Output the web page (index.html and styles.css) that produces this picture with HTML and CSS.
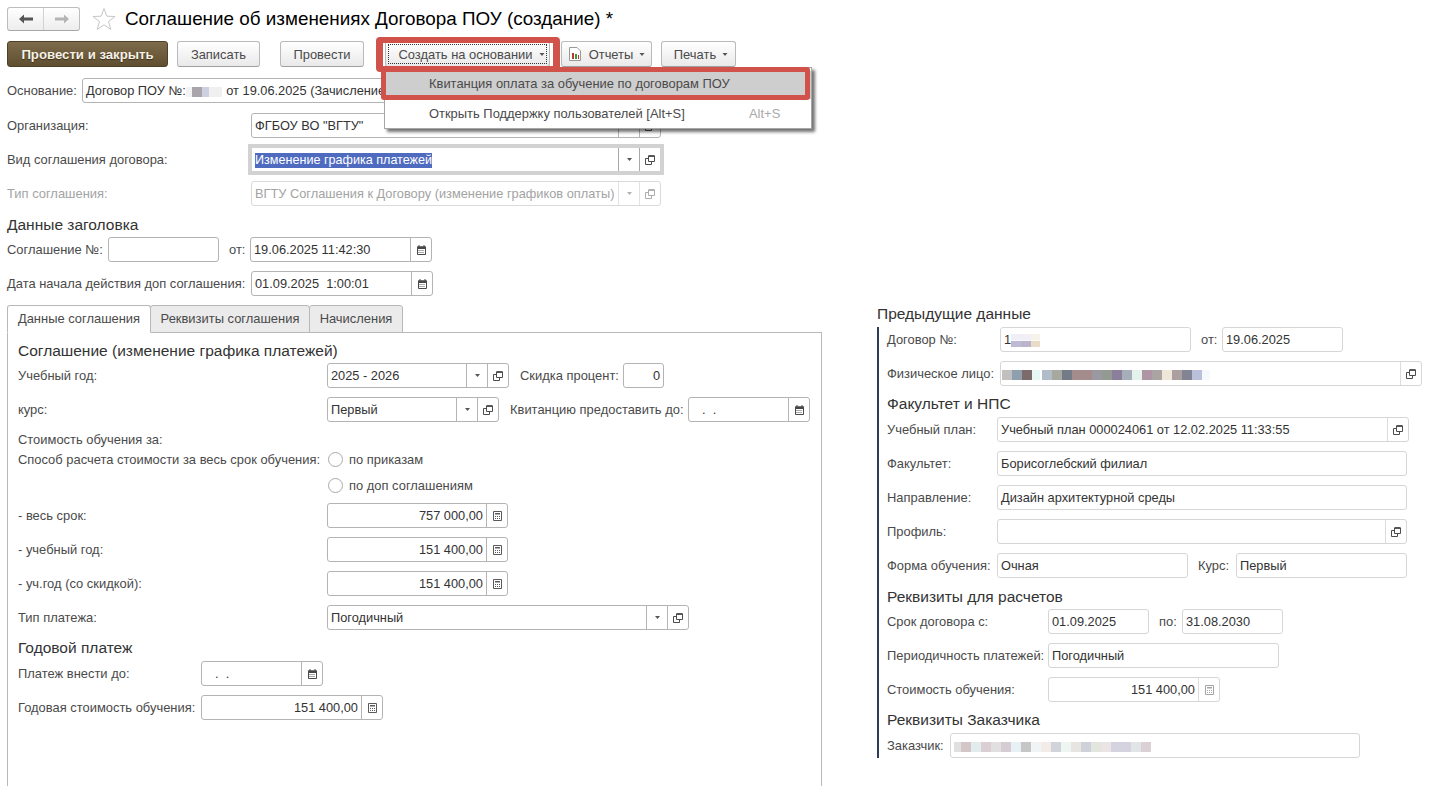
FILE: index.html
```html
<!DOCTYPE html>
<html lang="ru">
<head>
<meta charset="utf-8">
<title>Соглашение</title>
<link rel="stylesheet" href="styles.css">
</head>
<body>
<svg class="defs" width="0" height="0" aria-hidden="true">
  <symbol id="i-copy" viewBox="0 0 10 10"><path d="M3.500 1h6v5.500h-6z" fill="none" stroke="#4c4c4c"/><path d="M3.500 1h6" stroke="#3c3c3c" stroke-width="1.500"/><path d="M3.500 3.500H.5v6h6v-3" fill="none" stroke="#4c4c4c"/></symbol>
  <symbol id="i-tri" viewBox="0 0 5 3"><path d="M0 0h5L2.500 3z" fill="#555"/></symbol>
  <symbol id="i-cal" viewBox="0 0 9 10"><path d="M.5 2h8v7.500h-8z" fill="#fff" stroke="#484848"/><path d="M0 1.500h9V4H0z" fill="#484848"/><path d="M2 0v2M7 0v2" stroke="#484848"/><path d="M1.500 5.500h6M1.500 7.500h6" stroke="#555" stroke-dasharray="1 1" fill="none"/></symbol>
  <symbol id="i-calc" viewBox="0 0 9 10"><path d="M.5.500h8v9h-8z" fill="#fff" stroke="#5a5a5a"/><path d="M2 2h5v1.500H2z" fill="#5a5a5a"/><path d="M2 5.500h5M2 7.500h5" stroke="#5a5a5a" stroke-dasharray="1 1" fill="none"/></symbol>
</svg>

<header class="head">
  <div class="nav">
    <span class="nav-btn"><svg width="14" height="10" viewBox="0 0 14 10"><path d="M0 5l5-4.500V3.500h9v3H5v3z" fill="#555"/></svg></span>
    <span class="nav-btn"><svg width="14" height="10" viewBox="0 0 14 10"><path d="M14 5L9 .5V3.500H0v3h9v3z" fill="#b4b4b4"/></svg></span>
  </div>
  <svg class="star" width="24" height="24" viewBox="0 0 24 24"><path d="M12 1.500l2.800 7.700 8.200.3-6.500 5 2.300 7.900L12 17.800l-6.800 4.600 2.300-7.900-6.500-5 8.200-.3z" fill="#fff" stroke="#c6c6c6"/></svg>
  <h1 class="title">Соглашение об изменениях Договора ПОУ (создание) *</h1>
</header>

<nav class="toolbar">
  <span class="tb tb-main">Провести и закрыть</span>
  <span class="tb tb-save">Записать</span>
  <span class="tb tb-post">Провести</span>
  <div class="anchor">
    <span class="tb tb-create"><span class="focus">Создать на основании<svg class="tri" width="6" height="3"><use href="#i-tri"/></svg></span></span>
    <span class="mark mark-btn"></span>
    <div class="menu">
      <div class="mi mi-on">Квитанция оплата за обучение по договорам ПОУ</div>
      <div class="mi">Открыть Поддержку пользователей [Alt+S]<span class="key">Alt+S</span></div>
    </div>
    <span class="mark mark-item"></span>
  </div>
  <span class="tb tb-rep"><svg class="rep" width="12" height="14" viewBox="0 0 12 14"><path d="M.5.500h7.500l3.500 3.500v9.500H.500z" fill="#fff" stroke="#999"/><path d="M3 6h2v6H3z" fill="#c0392b"/><path d="M6 7h2v5H6z" fill="#3a9a3a"/><path d="M9 8h1v4H9z" fill="#c0392b"/></svg>Отчеты<svg class="tri" width="6" height="3"><use href="#i-tri"/></svg></span>
  <span class="tb tb-print">Печать<svg class="tri" width="6" height="3"><use href="#i-tri"/></svg></span>
</nav>

<section class="form">
  <div class="row r-first">
    <label class="lb w-osn">Основание:</label>
    <div class="fd w-base"><span class="val">Договор ПОУ №:<i class="blur blur-osn"></i> от 19.06.2025 (Зачисление)</span></div>
  </div>
  <div class="row r-org">
    <label class="lb w-top">Организация:</label>
    <div class="fd w-410"><span class="val">ФГБОУ ВО "ВГТУ"</span><span class="fb"><svg width="5" height="3"><use href="#i-tri"/></svg></span><span class="fb"><svg width="10" height="10"><use href="#i-copy"/></svg></span></div>
  </div>
  <div class="row">
    <label class="lb w-top">Вид соглашения договора:</label>
    <div class="fd w-410 focused"><span class="val"><span class="sel">Изменение графика платежей</span></span><span class="fb"><svg width="5" height="3"><use href="#i-tri"/></svg></span><span class="fb"><svg width="10" height="10"><use href="#i-copy"/></svg></span></div>
  </div>
  <div class="row dis">
    <label class="lb w-top">Тип соглашения:</label>
    <div class="fd w-410"><span class="val">ВГТУ Соглашения к Договору (изменение графиков оплаты)</span><span class="fb"><svg width="5" height="3"><use href="#i-tri"/></svg></span><span class="fb"><svg width="10" height="10"><use href="#i-copy"/></svg></span></div>
  </div>
  <h2 class="h h-data">Данные заголовка</h2>
  <div class="row r-num">
    <label class="lb w-num">Соглашение №:</label>
    <div class="fd w-111"></div>
    <label class="lb lb-ot">от:</label>
    <div class="fd w-182"><span class="val">19.06.2025 11:42:30</span><span class="fb"><svg width="9" height="10"><use href="#i-cal"/></svg></span></div>
  </div>
  <div class="row">
    <label class="lb w-top">Дата начала действия доп соглашения:</label>
    <div class="fd w-182"><span class="val">01.09.2025&nbsp; 1:00:01</span><span class="fb"><svg width="9" height="10"><use href="#i-cal"/></svg></span></div>
  </div>
</section>

<div class="lower">
  <section class="tabs">
    <div class="tabbar">
      <span class="tab tab-on">Данные соглашения</span>
      <span class="tab tab-2">Реквизиты соглашения</span>
      <span class="tab tab-3">Начисления</span>
    </div>
    <div class="panel">
      <h2 class="h h-agr">Соглашение (изменение графика платежей)</h2>
      <div class="row r-tight">
        <label class="lb w-pan">Учебный год:</label>
        <div class="fd w-182"><span class="val">2025 - 2026</span><span class="fb"><svg width="5" height="3"><use href="#i-tri"/></svg></span><span class="fb"><svg width="10" height="10"><use href="#i-copy"/></svg></span></div>
        <label class="lb lb-disc">Скидка процент:</label>
        <div class="fd w-41"><span class="val num">0</span></div>
      </div>
      <div class="row">
        <label class="lb w-pan">курс:</label>
        <div class="fd w-172"><span class="val">Первый</span><span class="fb"><svg width="5" height="3"><use href="#i-tri"/></svg></span><span class="fb"><svg width="10" height="10"><use href="#i-copy"/></svg></span></div>
        <label class="lb lb-recv">Квитанцию предоставить до:</label>
        <div class="fd w-122"><span class="val val-date">. &nbsp;.</span><span class="fb"><svg width="9" height="10"><use href="#i-cal"/></svg></span></div>
      </div>
      <div class="line l-cost">Стоимость обучения за:</div>
      <div class="line l-radio">
        <label class="lb w-pan">Способ расчета стоимости за весь срок обучения:</label>
        <span class="radio"></span><span class="lb">по приказам</span>
      </div>
      <div class="line l-radio l-radio2">
        <span class="w-pan"></span>
        <span class="radio"></span><span class="lb">по доп соглашениям</span>
      </div>
      <div class="row r-sum">
        <label class="lb w-pan">- весь срок:</label>
        <div class="fd w-181"><span class="val num">757 000,00</span><span class="fb"><svg width="9" height="10"><use href="#i-calc"/></svg></span></div>
      </div>
      <div class="row">
        <label class="lb w-pan">- учебный год:</label>
        <div class="fd w-181"><span class="val num">151 400,00</span><span class="fb"><svg width="9" height="10"><use href="#i-calc"/></svg></span></div>
      </div>
      <div class="row">
        <label class="lb w-pan">- уч.год (со скидкой):</label>
        <div class="fd w-181"><span class="val num">151 400,00</span><span class="fb"><svg width="9" height="10"><use href="#i-calc"/></svg></span></div>
      </div>
      <div class="row">
        <label class="lb w-pan">Тип платежа:</label>
        <div class="fd w-362"><span class="val">Погодичный</span><span class="fb"><svg width="5" height="3"><use href="#i-tri"/></svg></span><span class="fb"><svg width="10" height="10"><use href="#i-copy"/></svg></span></div>
      </div>
      <h2 class="h h-year">Годовой платеж</h2>
      <div class="row r-tight2">
        <label class="lb w-pay">Платеж внести до:</label>
        <div class="fd w-122"><span class="val val-date">. &nbsp;.</span><span class="fb"><svg width="9" height="10"><use href="#i-cal"/></svg></span></div>
      </div>
      <div class="row">
        <label class="lb w-pay">Годовая стоимость обучения:</label>
        <div class="fd w-182"><span class="val num">151 400,00</span><span class="fb"><svg width="9" height="10"><use href="#i-calc"/></svg></span></div>
      </div>
    </div>
  </section>

  <aside class="prev">
    <h2 class="h">Предыдущие данные</h2>
    <div class="prev-box">
      <div class="row r-zero">
        <label class="lb w-p1">Договор №:</label>
        <div class="fd lt w-191"><span class="val">1<i class="blur blur-num"></i></span></div>
        <label class="lb lb-pot">от:</label>
        <div class="fd lt w-121"><span class="val">19.06.2025</span></div>
      </div>
      <div class="row">
        <label class="lb w-p1">Физическое лицо:</label>
        <div class="fd lt w-422"><span class="val"><i class="blur blur-fio"></i></span><span class="fb"><svg width="10" height="10"><use href="#i-copy"/></svg></span></div>
      </div>
      <h2 class="h h-fac">Факультет и НПС</h2>
      <div class="row r-t4">
        <label class="lb w-p2">Учебный план:</label>
        <div class="fd lt w-412"><span class="val">Учебный план 000024061 от 12.02.2025 11:33:55</span><span class="fb"><svg width="10" height="10"><use href="#i-copy"/></svg></span></div>
      </div>
      <div class="row">
        <label class="lb w-p2">Факультет:</label>
        <div class="fd lt w-410"><span class="val">Борисоглебский филиал</span></div>
      </div>
      <div class="row">
        <label class="lb w-p2">Направление:</label>
        <div class="fd lt w-410"><span class="val">Дизайн архитектурной среды</span></div>
      </div>
      <div class="row">
        <label class="lb w-p2">Профиль:</label>
        <div class="fd lt w-410"><span class="val"></span><span class="fb"><svg width="10" height="10"><use href="#i-copy"/></svg></span></div>
      </div>
      <div class="row">
        <label class="lb w-p2">Форма обучения:</label>
        <div class="fd lt w-191"><span class="val">Очная</span></div>
        <label class="lb lb-kurs">Курс:</label>
        <div class="fd lt w-171"><span class="val">Первый</span></div>
      </div>
      <h2 class="h h-calc">Реквизиты для расчетов</h2>
      <div class="row r-t3">
        <label class="lb w-p3">Срок договора с:</label>
        <div class="fd lt w-101"><span class="val">01.09.2025</span></div>
        <label class="lb lb-po">по:</label>
        <div class="fd lt w-101"><span class="val">31.08.2030</span></div>
      </div>
      <div class="row">
        <label class="lb w-p3">Периодичность платежей:</label>
        <div class="fd lt w-231"><span class="val">Погодичный</span></div>
      </div>
      <div class="row">
        <label class="lb w-p3">Стоимость обучения:</label>
        <div class="fd lt w-172"><span class="val num">151 400,00</span><span class="fb fb-dim"><svg width="9" height="10"><use href="#i-calc"/></svg></span></div>
      </div>
      <h2 class="h h-cust">Реквизиты Заказчика</h2>
      <div class="row r-t4">
        <label class="lb w-p4">Заказчик:</label>
        <div class="fd lt w-410"><span class="val"><i class="blur blur-cust"></i></span></div>
      </div>
    </div>
  </aside>
</div>
</body>
</html>
```
FILE: styles.css
```css
* { box-sizing: border-box; }
html, body { margin: 0; padding: 0; }
body {
  width: 1448px; height: 786px; overflow: hidden; background: #fff;
  font-family: "Liberation Sans", Arial, sans-serif; font-size: 12.93px; color: #4a4a4a;
}
.defs { position: absolute; }
.head { display: flex; align-items: center; height: 24px; margin: 7px 0 0 7px; }
.nav { display: flex; width: 73px; height: 24px; border: 1px solid #bdbdbd; border-bottom-color: #a8a8a8; border-radius: 3px; background: linear-gradient(#fff, #ededed); }
.nav-btn { flex: 1; display: flex; align-items: center; justify-content: center; }
.nav-btn + .nav-btn { border-left: 1px solid #d2d2d2; }
.star { margin-left: 12px; }
.title { margin: 0 0 0 9px; font-size: 18.85px; font-weight: 400; color: #000; line-height: 24px; }

.toolbar { display: flex; margin: 10px 0 0 7px; height: 26px; }
.tb { display: flex; align-items: center; justify-content: center; height: 26px; border: 1px solid #bababa; border-bottom-color: #a0a0a0; border-radius: 3px; background: linear-gradient(#fff, #e9e9e9); color: #4a4a4a; white-space: nowrap; }
.tri { margin-left: 6px; }
.tb-main { width: 161px; background: linear-gradient(#7d6b4b, #5f4f30); border-color: #4f4127; color: #f6f1e6; font-weight: 700; font-size: 13.2px; text-shadow: 0 1px 1px #3c3018; }
.tb-save { width: 83px; margin-left: 9px; }
.tb-post { width: 84px; margin-left: 20px; }
.anchor { position: relative; margin-left: 21px; }
.tb-create { width: 165px; padding: 2px; }
.focus { display: flex; align-items: center; justify-content: center; width: 100%; height: 100%; padding-left: 8px; border: 1px dotted #333; }
.tb-rep { width: 91px; margin-left: 11px; padding-left: 1px; }
.rep { margin-right: 8px; }
.tb-print { width: 75px; margin-left: 9px; padding-left: 5px; }
.mark { position: absolute; border-style: solid; border-color: #d0524a; z-index: 5; pointer-events: none; }
.mark-btn { left: -9px; top: -4px; width: 184px; height: 35px; border-width: 6px 7px; border-radius: 4px; }
.mark-item { left: -4px; top: 26px; width: 429px; height: 33px; border-width: 5px; border-radius: 3px; }
.menu { position: absolute; left: -1px; top: 26px; width: 428px; height: 62px; background: #fff; border: 1px solid #a6a6a6; box-shadow: 3px 3px 3px rgba(0,0,0,.55); z-index: 4; padding-top: 3px; }
.mi { position: relative; height: 27px; line-height: 25px; padding-left: 44px; white-space: nowrap; }
.mi-on { background: #cecece; height: 28px; }
.mi + .mi { margin-top: 2px; }
.key { position: absolute; left: 364px; color: #a9a9a9; }

.form { padding-left: 7px; }
.row { display: flex; align-items: center; height: 25px; margin-top: 9px; }
.r-first { margin-top: 11px; }
.r-org { margin-top: 10px; }
.r-num { margin-top: 2px; }
.lb { white-space: nowrap; color: #4a4a4a; }
.dis .lb, .dis .val { color: #a3a3a3; }
.dis .fd { border-color: #dadada; }
.dis .fb { border-color: #e2e2e2; }
.dis .fb svg { opacity: .45; }
.w-osn { width: 75px; }
.w-top { width: 244px; }
.w-num { width: 101px; }
.lb-ot { margin: 0 4px 0 10px; width: 17px; }
.w-pan { display: block; width: 309px; flex: none; }
.w-pay { width: 183px; }
.lb-disc { margin: 0 4px 0 11px; width: 99px; }
.lb-recv { margin: 0 5px 0 11px; width: 173px; }

.fd { display: flex; align-items: stretch; height: 25px; flex: none; background: #fff; border: 1px solid #b4b4b4; border-radius: 3px; }
.fd.lt { border-color: #d6d6d6; }
.lt .fb { border-color: #dcdcdc; }
.fb-dim svg { opacity: .55; }
.focused { border-color: #d2d2d2; border-radius: 0; outline: 3px solid #d2d2d2; }
.focused .fb { border-color: #a8a8a8; }
.val { flex: 1; min-width: 0; padding: 0 3px; line-height: 23px; font-size: 12.8px; color: #333; white-space: nowrap; overflow: hidden; }
.val.num { text-align: right; }
.val-date { padding-left: 13px; }
.fb { flex: none; width: 21px; display: flex; align-items: center; justify-content: center; border-left: 1px solid #b4b4b4; }
.sel { background: #4f6bc0; color: #fff; display: inline-block; line-height: 15px; font-size: 12.6px; }
.w-base { width: 579px; }
.w-410 { width: 410px; }
.w-111 { width: 111px; }
.w-182 { width: 182px; }
.w-181 { width: 181px; }
.w-172 { width: 172px; }
.w-41 { width: 41px; }
.w-122 { width: 122px; }
.w-362 { width: 362px; }
.w-191 { width: 191px; }
.w-121 { width: 121px; }
.w-422 { width: 422px; }
.w-412 { width: 412px; }
.w-171 { width: 171px; }
.w-101 { width: 101px; }
.w-231 { width: 231px; }

.h { margin: 0; font-size: 15.5px; font-weight: 400; line-height: 18px; color: #333; white-space: nowrap; }
.h-data { margin-top: 9px; height: 20px; line-height: 20px; }
.lower { display: flex; margin-top: 9px; }
.tabs { width: 815px; margin-left: 7px; }
.tabbar { display: flex; height: 28px; }
.tab { height: 28px; line-height: 26px; text-align: center; border: 1px solid #b8b8b8; border-radius: 3px 3px 0 0; background: #ebebeb; margin-left: -1px; }
.tab-on { width: 144px; margin-left: 0; background: #fff; border-bottom-color: #fff; position: relative; z-index: 1; }
.tab-2 { width: 160px; }
.tab-3 { width: 94px; }
.panel { height: 460px; margin-top: -1px; border: 1px solid #b8b8b8; padding-left: 10px; }
.h-agr { margin-top: 8px; height: 20px; line-height: 20px; }
.r-tight { margin-top: 2px; }
.r-tight2 { margin-top: 3px; }
.line { display: flex; align-items: center; height: 20px; }
.l-cost { margin-top: 7px; }
.l-radio2 { margin-top: 6px; }
.radio { width: 15px; height: 15px; margin: 0 6px 0 1px; border: 1px solid #aaa; border-radius: 50%; background: #fff; flex: none; }
.r-sum { margin-top: 8px; }
.h-year { margin-top: 8px; height: 20px; line-height: 20px; }

.prev { margin-left: 55px; }
.prev-box { margin-top: 4px; border-left: 2px solid #2e3c58; padding-left: 8px; height: 431px; }
.r-zero { margin-top: 0; }
.r-t4 { margin-top: 4px; }
.r-t3 { margin-top: 3px; }
.h-fac { margin-top: 9px; }
.h-calc { margin-top: 10px; }
.h-cust { margin-top: 9px; }
.w-p1 { width: 113px; }
.w-p2 { width: 110px; }
.w-p3 { width: 161px; }
.w-p4 { width: 63px; }
.lb-pot { margin: 0 4px 0 10px; width: 17px; }
.lb-kurs { margin: 0 4px 0 10px; width: 34px; }
.lb-po { margin: 0 4px 0 10px; width: 19px; }

.blur { display: inline-block; vertical-align: middle; height: 10px; }
.blur-osn { width: 36px; margin-right: 1px; background: linear-gradient(90deg, #f3f3f3 0 18%, #a9a5aa 18% 45%, #ccd0e0 45% 65%, #f0f0f0 65%); }
.blur-num { width: 29px; height: 13px; background:
  linear-gradient(90deg, #f0eff6 0 20px, #f7f2ea 20px 29px) top / 100% 50% no-repeat,
  linear-gradient(90deg, #bdbbd3 0 10px, #bab4cc 10px 20px, #e8dcc6 20px 29px) bottom / 100% 50% no-repeat; }
.blur-fio { width: 208px; margin-left: -2px; background: linear-gradient(90deg, #c0c0c0 0 10px, #8f9fae 10px 20px, #7d6a6a 20px 30px, #e5f8f3 30px 38px, #fff 38px 40px, #b0bcc8 40px 50px, #a7a99e 50px 60px, #757b86 60px 70px, #a48c8c 70px 80px, #a58b8b 80px 90px, #9a98a0 90px 100px, #939a92 100px 110px, #8c7f9c 110px 120px, #a5aeb9 120px 130px, #e3f3ec 130px 140px, #af95a3 140px 150px, #aaa5a3 150px 160px, #eee6d8 160px 170px, #ab9f9f 170px 180px, #828494 180px 190px, #bac0da 190px 200px, #f5f9fd 200px 208px); }
.blur-cust { width: 197px; background: linear-gradient(90deg, #e0e0e0 0 7px, #d3c6c8 7px 17px, #e2ecec 17px 27px, #dccfd4 27px 37px, #e1dfe0 37px 47px, #d6cdd4 47px 57px, #e6f0f5 57px 67px, #c6c6c6 67px 77px, #f0f4f4 77px 87px, #f3ebe8 87px 97px, #d2d4dc 97px 107px, #eef6f2 107px 117px, #e8e4e2 117px 127px, #cfd1da 127px 137px, #e3e6de 137px 147px, #eae4e4 147px 157px, #d6d3e0 157px 177px, #e0e6e8 177px 187px, #dbd0d3 187px 197px); }
```
